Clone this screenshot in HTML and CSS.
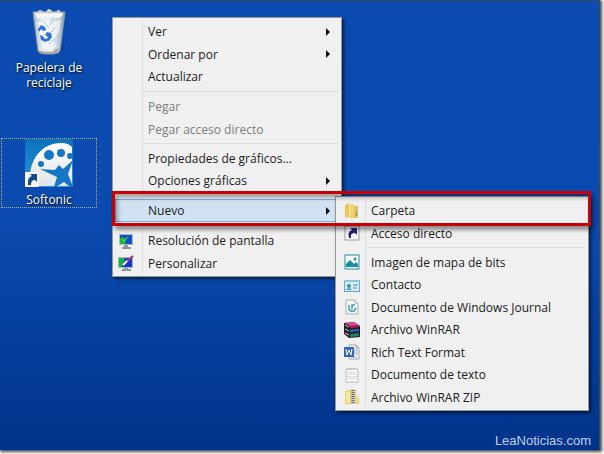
FILE: index.html
```html
<!DOCTYPE html>
<html lang="es">
<head>
  <meta charset="UTF-8" />
  <meta name="viewport" content="width=device-width, initial-scale=1.0"/>
  <title>Escritorio</title>
  <link rel="stylesheet" href="styles.css">
</head>
<body>
  <main class="desktop">
    <a href="#papelera" class="shortcut trash">
      <svg width="36" height="46" viewBox="0 0 36 46">
        <defs>
          <linearGradient id="bin" x1="0" x2="1" y1="0" y2="0">
            <stop offset="0" stop-color="#a9bac9"/>
            <stop offset=".3" stop-color="#e9f1f7"/>
            <stop offset=".7" stop-color="#d3dfe9"/>
            <stop offset="1" stop-color="#8fa3b5"/>
          </linearGradient>
        </defs>
        <path d="M29 44l5-6-2-8z" fill="#0a3a8a" opacity=".5"/>
        <path d="M2 3h32l-5 39q-11 4-22 0z" fill="url(#bin)"/>
        <path d="M4 4l5-3 5 2 4-3 5 3 5-2 4 4-3 4H6z" fill="#f4f8fb"/>
        <path d="M6 14l8-5 7 5 9-4-2 13-7 9 5 5-6 4-9-2 5-7-7-6z" fill="#fff" opacity=".6"/>
        <path d="M11 11l7 8M23 8l-4 8M25 18l-6 6M24 29l-6 6" stroke="#b8c8d5" fill="none"/>
        <path d="M2 3h32M2 3l5 39M34 3l-5 39" stroke="#8996a2" fill="none"/>
        <path d="M7 39q11 4 22 0l-1 5q-10 3-20 0z" fill="#a7aaa9"/>
        <path d="M8 40q8 3 15 1" stroke="#eee" stroke-width="2" fill="none"/>
        <path d="M7 20l3-4 4 2 1 3-3 1-2-2-2 3zM16 23l4 1 1 4-3 4-3-1 2-3-3-2zM9 26l3 1 1 2 4 2-2 2-5-2z" fill="#2f74d3"/>
      </svg>
      <span>Papelera de reciclaje</span>
    </a>
    <a href="#softonic" class="shortcut selected">
      <svg width="48" height="48" viewBox="0 0 48 48">
        <defs>
          <linearGradient id="soft" x1="0" x2="0" y1="0" y2="1">
            <stop offset="0" stop-color="#0b72bd"/>
            <stop offset="1" stop-color="#2797e0"/>
          </linearGradient>
          <linearGradient id="palette" x1="0" x2="0" y1="0" y2="1">
            <stop offset="0" stop-color="#ffffff"/>
            <stop offset="1" stop-color="#dfe4ea"/>
          </linearGradient>
        </defs>
        <path d="M0 0h48v48H0z" fill="url(#soft)"/>
        <path d="M5 47V37C6 17 20 3 37 4q6 0 10 4v39z" fill="url(#palette)"/>
        <g fill="#1476c4">
          <circle cx="24" cy="16" r="5"/>
          <circle cx="36" cy="14" r="4"/>
          <circle cx="45" cy="17" r="3"/>
          <circle cx="16" cy="25" r="3"/>
          <path d="M15 30l15 1 4-5 4 4 10-9-5 14 5 13h-3l-6-5-8 5h-2l3-10z"/>
        </g>
        <path d="M0 33h14v15H0z" fill="#f7f7f7"/>
        <path d="M3 46q-1-8 4-9l-2-2h7v8l-2-2q-4 0-4 5z" fill="#174b87"/>
      </svg>
      <span>Softonic</span>
    </a>

    <ul class="menu context-menu">
      <li><button type="button" class="has-arrow">Ver</button></li>
      <li><button type="button" class="has-arrow">Ordenar por</button></li>
      <li><button type="button">Actualizar</button></li>
      <li class="separator"></li>
      <li><button type="button" disabled>Pegar</button></li>
      <li><button type="button" disabled>Pegar acceso directo</button></li>
      <li class="separator"></li>
      <li><button type="button">Propiedades de gráficos...</button></li>
      <li><button type="button" class="has-arrow">Opciones gráficas</button></li>
      <li class="separator"></li>
      <li><button type="button" class="has-arrow active">Nuevo</button></li>
      <li class="separator"></li>
      <li>
        <svg width="16" height="16" viewBox="0 0 16 16">
          <path d="M1 1h14v11H1z" fill="#a9b9c6"/>
          <path d="M2 2h12v9H2z" fill="#1550c8"/>
          <path d="M2 5q5-2 6 2l-1 4H2z" fill="#20b83c"/>
          <path d="M4 6l2 2 4-4" stroke="#54e56c" stroke-width="1" fill="none"/>
          <path d="M6 12h4v2h3v2H4v-2h2z" fill="#8b989f"/>
        </svg>
        <button type="button">Resolución de pantalla</button>
      </li>
      <li>
        <svg width="16" height="16" viewBox="0 0 16 16">
          <path d="M0 2h15v11H0z" fill="#a9b9c6"/>
          <path d="M1 3h13v9H1z" fill="#1637c4"/>
          <path d="M1 3h6L4 12H1z" fill="#18b244"/>
          <path d="M5 10l5-5" stroke="#fff" stroke-width="2"/>
          <path d="M9 6l6-5" stroke="#a33b76" stroke-width="2"/>
          <path d="M6 13h4v1h3v2H4v-2h2z" fill="#8b989f"/>
        </svg>
        <button type="button">Personalizar</button>
      </li>
    </ul>

    <ul class="menu submenu">
      <li>
        <svg width="16" height="16" viewBox="0 0 16 16">
          <path d="M1 2l5-2v15l-5-1z" fill="#e5c95e"/>
          <path d="M5 1h5v14H5z" fill="#f8e9a0"/>
          <path d="M6 2l4-1v14l-4 1z" fill="#edd374"/>
          <path d="M10 3h4v12h-4z" fill="#dfc25b"/>
          <path d="M12 9h1v4h-1z" fill="#4b9bb8"/>
        </svg>
        <button type="button">Carpeta</button>
      </li>
      <li>
        <svg width="16" height="16" viewBox="0 0 16 16">
          <path d="M1 1h14v14H1z" fill="#f8f8f8" stroke="#9a9aa6"/>
          <path d="M5 13Q3 6 8 5L6 3h7v7l-2-2q-5 0-4 5z" fill="#28246f"/>
        </svg>
        <button type="button">Acceso directo</button>
      </li>
      <li class="separator"></li>
      <li>
        <svg width="16" height="16" viewBox="0 0 16 16">
          <path d="M1 1h14v14H1z" fill="#fff" stroke="#168da0"/>
          <path d="M2 13v-3l4-4 4 4 2-2 2 2v3z" fill="#168da0"/>
          <circle cx="11" cy="5" r="1.5" fill="#168da0"/>
        </svg>
        <button type="button">Imagen de mapa de bits</button>
      </li>
      <li>
        <svg width="16" height="16" viewBox="0 0 16 16">
          <path d="M0 3h16v12H0z" fill="#64a5c8"/>
          <path d="M1 5h14v9H1z" fill="#d7edf7"/>
          <path d="M0 3h16v2H0z" fill="#8fc4df"/>
          <circle cx="5" cy="9" r="2" fill="#3d8cb1"/>
          <path d="M2 13q3-4 6 0z" fill="#4b9fbe"/>
          <path d="M9 8h5M9 11h4" stroke="#4686a8"/>
        </svg>
        <button type="button">Contacto</button>
      </li>
      <li>
        <svg width="16" height="16" viewBox="0 0 16 16">
          <path d="M2 1h9l3 3v11H2z" fill="#f1f5f6" stroke="#a9b1b4"/>
          <path d="M11 1v3h3" fill="#fff" stroke="#a9b1b4"/>
          <path d="M5 6v4q1 3 5 2l2-3M8 10V6h3" stroke="#459eb9" stroke-width="1.5" fill="none"/>
        </svg>
        <button type="button">Documento de Windows Journal</button>
      </li>
      <li>
        <svg width="16" height="16" viewBox="0 0 16 16">
          <path d="M0 1l10-1 6 4v11l-11 1-5-4z" fill="#24202a"/>
          <path d="M1 1l9-1 5 3-9 1z" fill="#d94c99"/>
          <path d="M6 4l9-1v2l-9 1z" fill="#b51c68"/>
          <path d="M6 8l9-1v2l-9 1z" fill="#316bd1"/>
          <path d="M6 12l9-1v3l-9 1z" fill="#18845a"/>
          <path d="M1 3l4 2M1 7l4 2M1 11l4 2" stroke="#d7cebd"/>
        </svg>
        <button type="button">Archivo WinRAR</button>
      </li>
      <li>
        <svg width="16" height="16" viewBox="0 0 16 16">
          <path d="M5 1h7l3 3v11H5z" fill="#fff" stroke="#9ba6b1"/>
          <path d="M12 1v3h3M10 6h4M10 8h4M10 10h4M7 13h6" stroke="#9ba6b1" fill="none"/>
          <path d="M0 3h10v10H0z" fill="#3667a8"/>
          <path d="M2 5l1 6 2-5 2 5 1-6" stroke="#fff" fill="none"/>
        </svg>
        <button type="button">Rich Text Format</button>
      </li>
      <li>
        <svg width="16" height="16" viewBox="0 0 16 16">
          <path d="M2 2h12v13H2z" fill="#f8fafb" stroke="#b6bdc1"/>
          <path d="M3 5.500h10M3 7.500h10M3 9.500h10M3 11.500h10" stroke="#d8e0e6"/>
          <path d="M3.500 1v2M5.500 1v2M7.500 1v2M9.500 1v2M11.500 1v2" stroke="#b6bdc1"/>
        </svg>
        <button type="button">Documento de texto</button>
      </li>
      <li>
        <svg width="16" height="16" viewBox="0 0 16 16">
          <path d="M1 2l5-1h6v6l3 2v6H1z" fill="#e8ca67"/>
          <path d="M2 3l4-1v12H2z" fill="#f8e7a1"/>
          <path d="M7 0h4v15H7z" fill="#d5d4c6"/>
          <path d="M9 1v13" stroke="#63666a" stroke-width="3" stroke-dasharray="1 1"/>
          <path d="M12 8h2v6h-2z" fill="#f8df84"/>
        </svg>
        <button type="button">Archivo WinRAR ZIP</button>
      </li>
    </ul>

    <div class="highlight"></div>
    <footer class="watermark">LeaNoticias.com</footer>
  </main>
</body>
</html>
```

FILE: styles.css
```css
:root {
  --menu-bg: #f0f0f0;
  --line: #dddddd;
  --red: #c90008;
  --font-family: "Open Sans", "Noto Sans", sans-serif;
}

* {
  margin: 0;
  padding: 0;
  box-sizing: border-box;
}

body {
  min-height: 100vh;
  display: flex;
  padding: 0 4px 4px 0;
  font-family: var(--font-family);
  font-size: 12px;
  background: #ffffff;
  overflow: hidden;
}

.desktop {
  position: relative;
  flex: 1;
  display: flex;
  flex-direction: column;
  align-items: flex-start;
  gap: 48px;
  padding: 8px 0 0 1px;
  background: linear-gradient(#0c4baf, #0b4aae 50%, #00338b);
  border: 1px solid #34486b;
  border-width: 1px 1px 0 0;
  box-shadow: 1px 1px 3px 1px #444444;
}

.shortcut {
  width: 96px;
  display: flex;
  flex-direction: column;
  align-items: center;
  color: #ffffff;
  line-height: 15px;
  text-align: center;
  text-decoration: none;
  text-shadow: 1px 1px 2px #000000;
}

.shortcut span {
  max-width: 80px;
}

.trash {
  gap: 5px;
}

.selected {
  gap: 5px;
  border: 1px dotted #b5ab91;
}

.menu {
  position: absolute;
  padding: 2px;
  list-style: none;
  background: linear-gradient(var(--line), var(--line)) 29px 3px / 1px calc(100% - 6px) no-repeat var(--menu-bg);
  border: 1px solid #979797;
  box-shadow: 2px 2px 3px rgba(0, 0, 0, 0.6);
}

.context-menu {
  top: 16px;
  left: 112px;
  width: 230px;
}

.submenu {
  top: 195px;
  left: 335px;
  width: 254px;
}

.menu li {
  display: grid;
  grid-template-columns: 28px 1fr;
  align-items: center;
  height: 23px;
}

.menu li:nth-child(even) {
  height: 22px;
}

.menu li.separator {
  height: 7px;
}

.separator::after {
  content: "";
  grid-column: 2;
  height: 1px;
  background: var(--line);
}

.menu svg,
.menu button {
  grid-row: 1;
}

.menu svg {
  grid-column: 1;
  justify-self: center;
}

.context-menu svg {
  justify-self: start;
  margin-left: 3px;
}

.menu button {
  grid-column: 1 / 3;
  height: 100%;
  padding-left: 33px;
  font: inherit;
  color: #1c1c1c;
  text-align: left;
  white-space: nowrap;
  background: none;
  border: none;
}

.menu button:disabled {
  color: #7d7d7d;
}

.menu .has-arrow {
  display: flex;
  align-items: center;
  justify-content: space-between;
  padding-right: 9px;
}

.has-arrow::after {
  content: "";
  border: 4px solid transparent;
  border-left-color: #111111;
  border-right: 0;
}

.menu .active {
  background: #d1e2f2;
  box-shadow: inset 0 0 0 1px #78aee5;
}

.highlight {
  position: absolute;
  top: 190px;
  left: 112px;
  width: 479px;
  height: 35px;
  border: 3px solid var(--red);
  box-shadow: 3px 4px 4px rgba(0, 0, 0, 0.4), inset 3px 4px 4px rgba(0, 0, 0, 0.3);
  pointer-events: none;
}

.watermark {
  position: absolute;
  right: 8px;
  bottom: 2px;
  font-family: "Liberation Sans", sans-serif;
  font-size: 13px;
  color: #c3d0e6;
}
```
